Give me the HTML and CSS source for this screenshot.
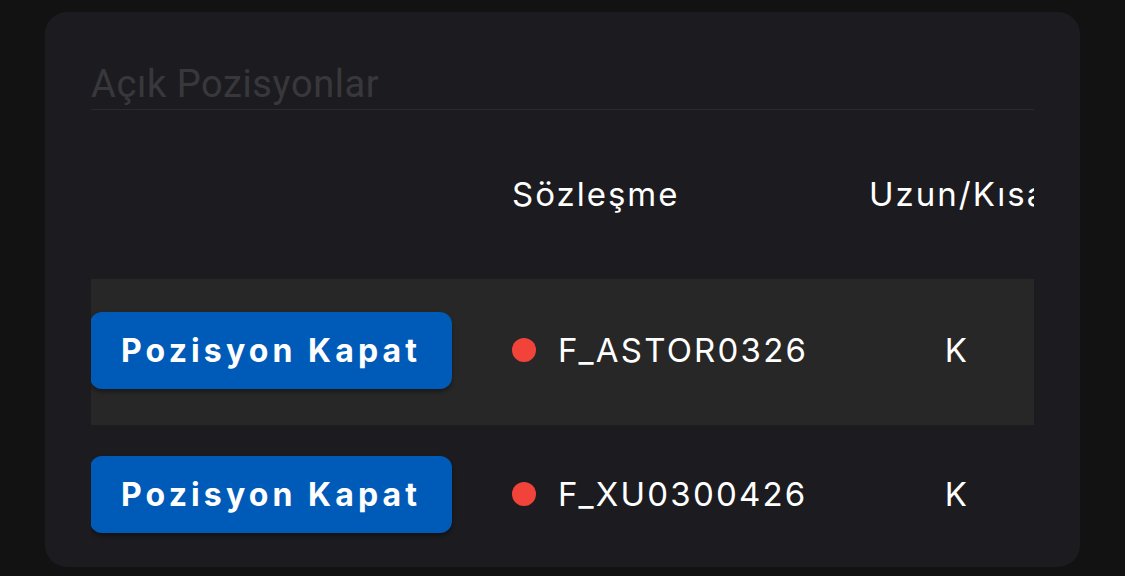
FILE: index.html
```html
<!DOCTYPE html>
<html lang="tr">
<head>
  <meta charset="UTF-8"/>
  <meta name="viewport" content="width=device-width, initial-scale=1.0"/>
  <title>Açık Pozisyonlar</title>
  <link rel="stylesheet" href="styles.css">
</head>
<body>

  <!-- Open positions card -->
  <div class="card">
    <h2 class="card-title">Açık Pozisyonlar</h2>

    <div class="table">
      <div class="row head">
        <div class="cell"></div>
        <div class="cell">Sözleşme</div>
        <div class="cell">Uzun/Kısa</div>
      </div>

      <div class="row active">
        <div class="cell"><button class="close-btn">Pozisyon Kapat</button></div>
        <div class="cell contract"><span class="dot"></span>F_ASTOR0326</div>
        <div class="cell side">K</div>
      </div>

      <div class="row last">
        <div class="cell"><button class="close-btn">Pozisyon Kapat</button></div>
        <div class="cell contract"><span class="dot"></span>F_XU0300426</div>
        <div class="cell side">K</div>
      </div>
    </div>
  </div>

</body>
</html>
```

FILE: styles.css
```css
* {
  box-sizing: border-box;
}

body {
  margin: 0;
  background-color: #121212;
  font-family: 'Inter', 'Noto Sans', sans-serif;
  color: #ffffff;
  height: 576px;
  overflow: hidden;
}

.card {
  margin: 12px 45px 0;
  height: 555px;
  background-color: #1c1c20;
  border-radius: 22px;
  padding: 50px 46px 0;
  overflow: hidden;
}

.card-title {
  margin: 0;
  font-family: 'Roboto', sans-serif;
  font-weight: 400;
  font-size: 38px;
  letter-spacing: 0.6px;
  line-height: 44px;
  color: #38383c;
  padding-bottom: 3px;
  border-bottom: 1px solid #2a2a2e;
}

.table {
  overflow: hidden;
}

.row {
  display: grid;
  grid-template-columns: 421px 357px 176px;
  align-items: center;
  height: 146px;
  padding-bottom: 4px;
  font-size: 33px;
  letter-spacing: 2.2px;
}

.row.head {
  height: 169px;
  align-items: start;
  padding-top: 64px;
  line-height: 40px;
}

.row.head .cell {
  letter-spacing: 2px;
}

.row.active {
  background-color: #272727;
}

.row.last {
  padding-bottom: 8px;
}

.close-btn {
  width: 362px;
  height: 77px;
  margin-left: -1px;
  border: none;
  border-radius: 12px;
  background-color: #005bb8;
  color: #ffffff;
  font-family: 'Inter', sans-serif;
  font-weight: 700;
  font-size: 32px;
  letter-spacing: 4.1px;
  box-shadow: 0 3px 4px rgba(0, 0, 0, 0.35);
  cursor: pointer;
  padding: 0;
}

.contract {
  display: flex;
  align-items: center;
  gap: 22px;
}

.dot {
  width: 24px;
  height: 24px;
  border-radius: 50%;
  background-color: #f2433a;
}

.side {
  text-align: center;
}
```
